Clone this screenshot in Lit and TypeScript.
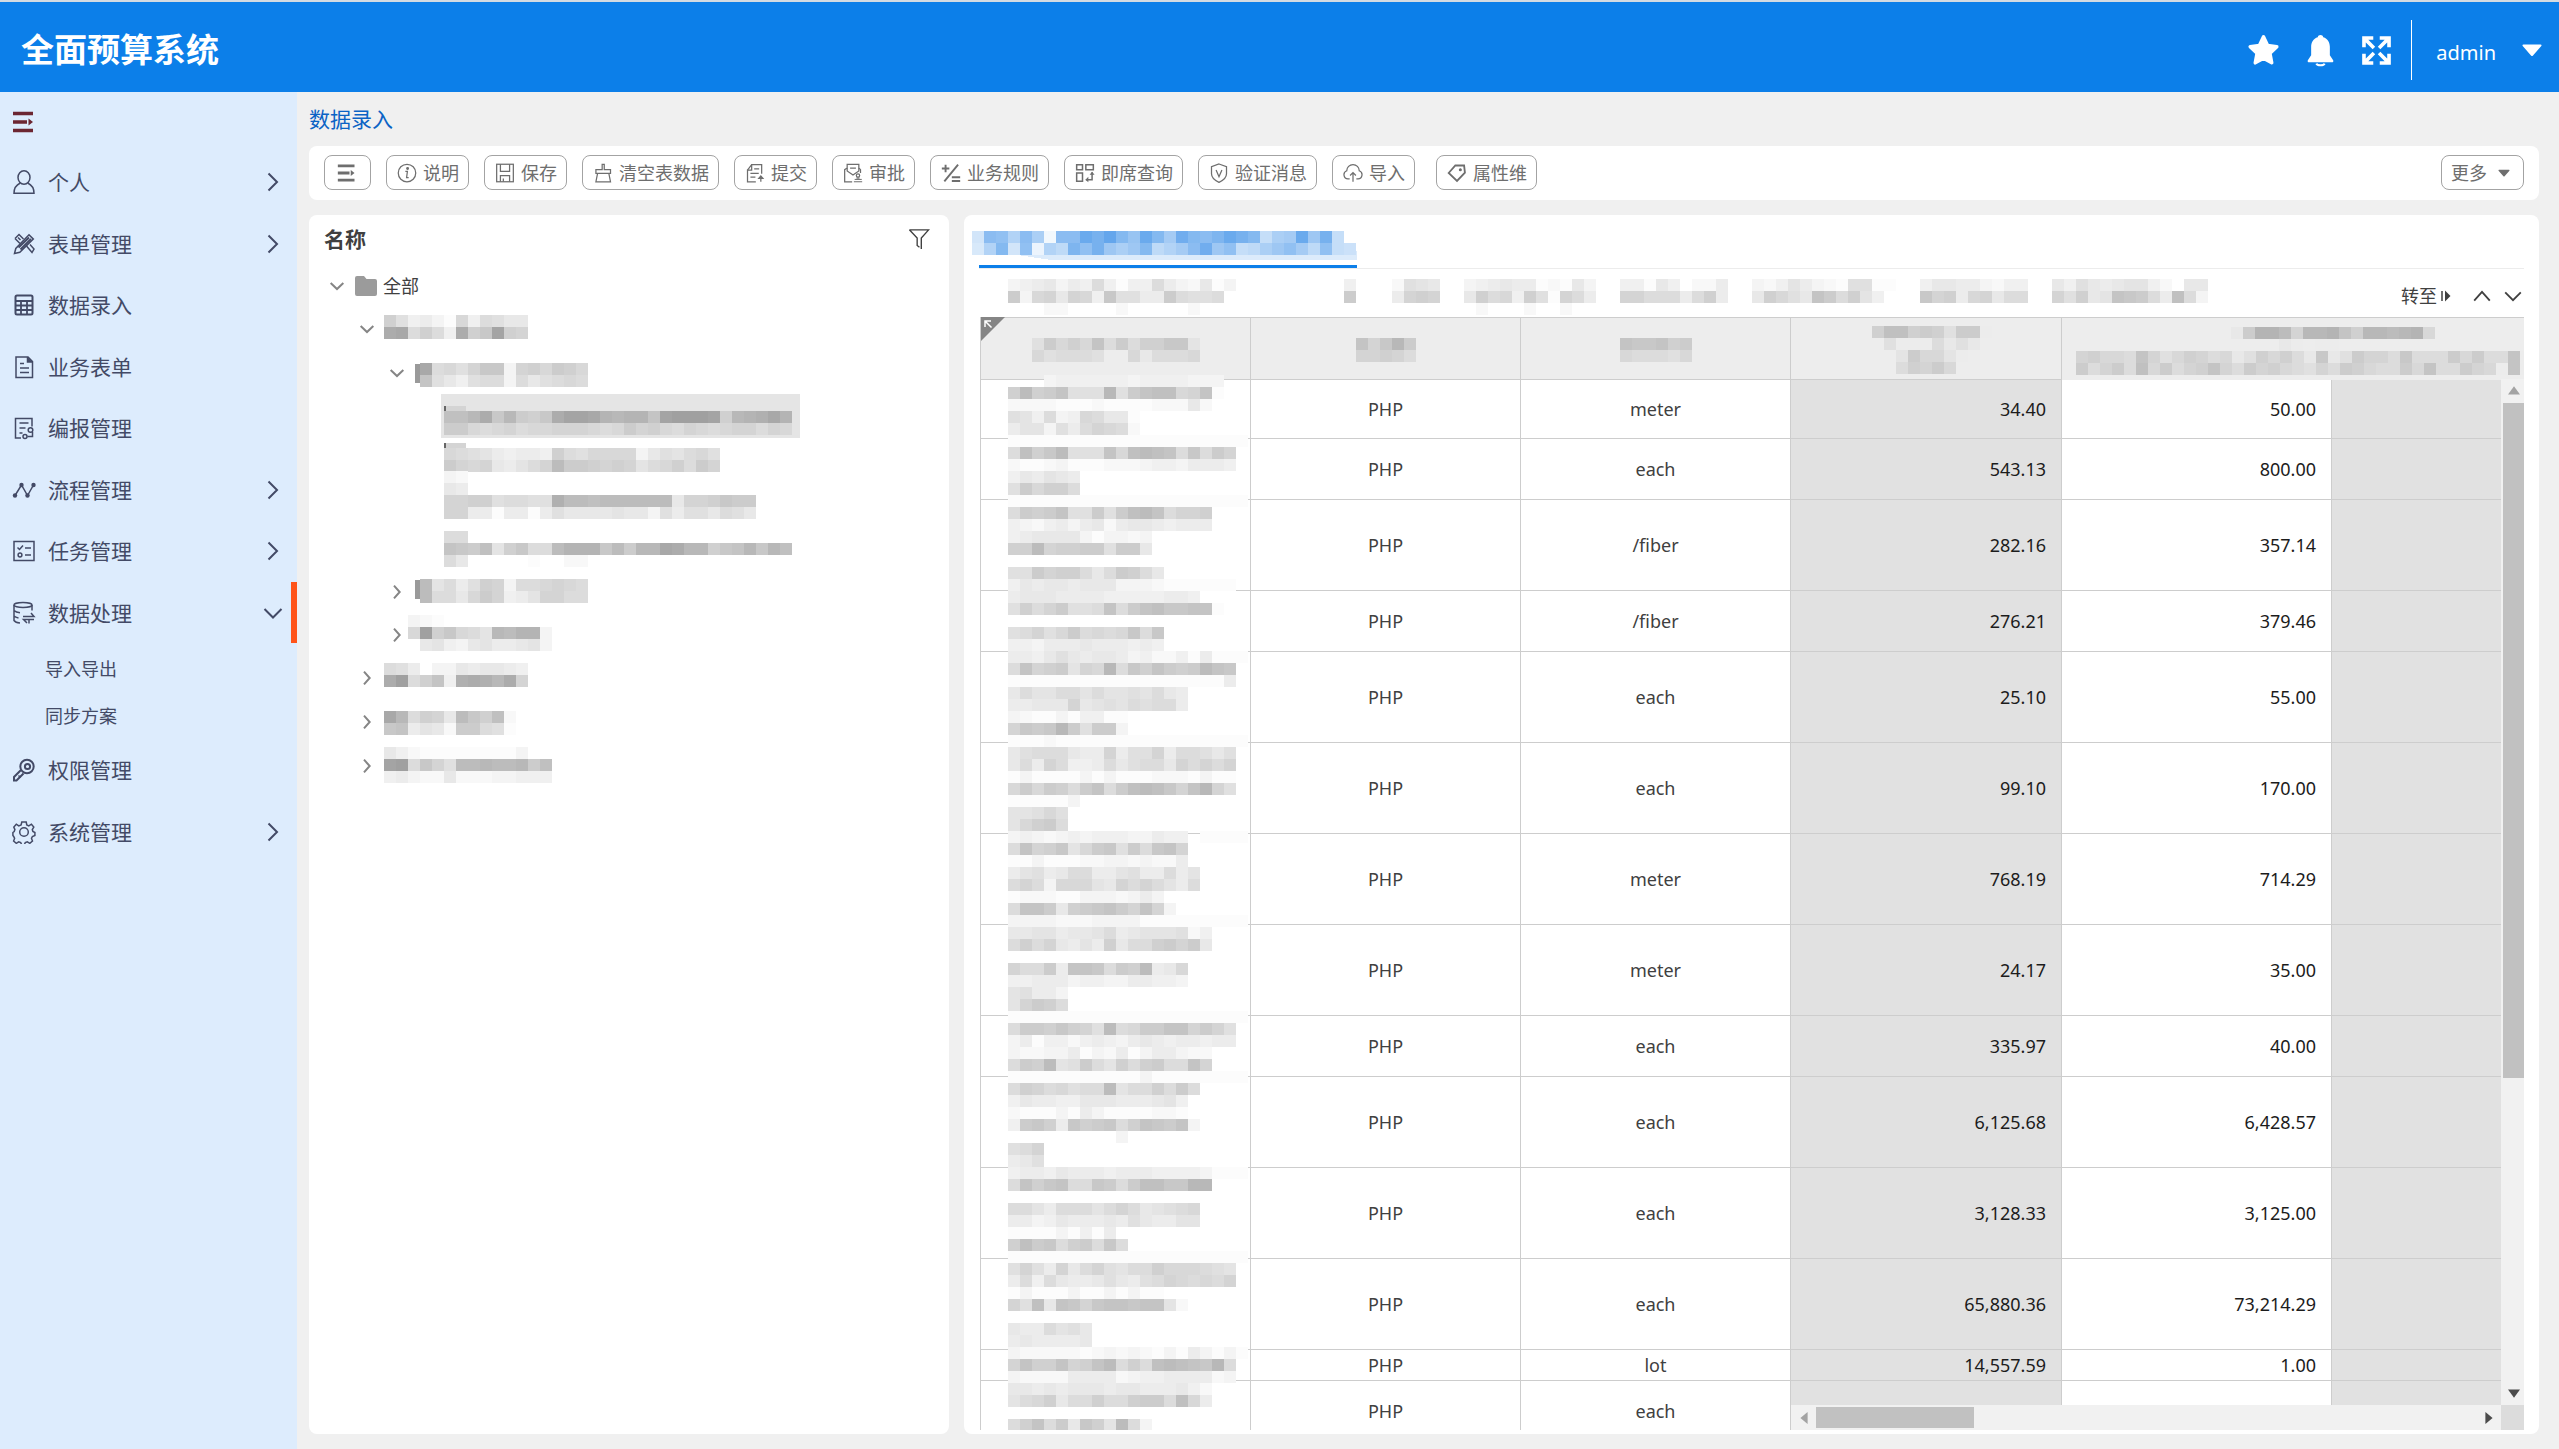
import { LitElement, html, svg, css, nothing, type TemplateResult } from "lit";
import { customElement, property } from "lit/decorators.js";
import { classMap } from "lit/directives/class-map.js";

const CELL = 12;

/** Shade letters run from A (dark) to X (nearly white); "." leaves a gap, "@n" jumps to column n. */
function shade(letter: string, tone: string): string {
  const step = letter.charCodeAt(0) - 65;
  if (tone === "blue") {
    const t = step / 24;
    const mix = (from: number) => Math.round(from + (255 - from) * t);
    return `rgb(${mix(100)},${mix(166)},${mix(236)})`;
  }
  const v = 160 + step * 4;
  return `rgb(${v},${v},${v})`;
}

/** Blocks that stand in for confidential text. */
function mosaic(lines: string[], x = 0, y = 0, width = 240, height = 24, tone = "grey", under: unknown = nothing) {
  const cells: TemplateResult[] = [];
  lines.forEach((line, row) => {
    let col = 0;
    for (const part of line.match(/@\d+|./g) ?? []) {
      if (part[0] === "@") {
        col = Number(part.slice(1));
        continue;
      }
      if (part !== ".") {
        cells.push(
          svg`<rect x=${x + col * CELL} y=${y + row * CELL} width=${CELL} height=${CELL} fill=${shade(part, tone)}></rect>`
        );
      }
      col++;
    }
  });
  return html`<svg class="mosaic" width=${width} height=${height} shape-rendering="crispEdges" aria-hidden="true">${under}${cells}</svg>`;
}

const ICONS: Record<string, TemplateResult> = {
  indent: svg`<path d="M1 3.5h20M1 12h14M1 20.5h20" stroke-width="3.4"/><path d="M16.500 8.500l4.500 3.500-4.500 3.500z" fill="currentColor" stroke="none"/>`,
  person: svg`<ellipse cx="12" cy="7.500" rx="6" ry="6.700"/><path d="M8.300 13C4.500 14.800 2 18 2 23.200h20c0-5.200-2.500-8.400-6.300-10.200"/>`,
  tools: svg`<path d="M3 6.500l4-4 4.500 4.500M3 6.500l5 5M14.500 14l5.500 6.500 2-3.500-4-4.500M6 5.500l2.500 2.500"/><path d="M2.500 21.500l1.300-5L17 2.800l4.300 4.300L7.800 20.300z" /><path d="M6.500 15.500L17 5.500M8.500 17.500L19 7" stroke-width="2"/>`,
  calc: svg`<rect x="3.500" y="2.500" width="17" height="19" rx="1.500" stroke-width="2"/><path d="M3.500 8h17M3.500 12.500h17M3.500 17h17M9 8v13M15 8v13" stroke-width="1.800"/>`,
  doc: svg`<path d="M4 2h12l4.500 4.500V22.500H4z"/><path d="M15.500 2v5h5" fill="currentColor"/><path d="M8 8.500h4M8 13h9M8 17.500h9"/>`,
  report: svg`<path d="M9 22H3.500V2.500H20v8"/><path d="M7.500 7h9M7.500 12h6M7.500 17h3"/><circle cx="18.500" cy="14" r="2.300"/><circle cx="13" cy="20.500" r="2"/><path d="M20.500 16v4.500h-5"/>`,
  flow: svg`<path d="M3 17.500L9.500 7l6 10.500L21.500 7"/><g fill="currentColor" stroke="none"><circle cx="3" cy="17.500" r="2.200"/><circle cx="9.500" cy="7" r="2.200"/><circle cx="15.500" cy="17.500" r="2.200"/><circle cx="21.500" cy="7" r="2.200"/></g>`,
  task: svg`<rect x="2" y="2.500" width="20" height="19"/><path d="M5.500 8.500l2 2 3.500-4M13 9h6M13 16h6"/><circle cx="8" cy="16" r="1.900"/>`,
  data: svg`<ellipse cx="11" cy="4" rx="9" ry="2.500"/><path d="M2 4v15.500c1 1.500 3 2.300 6 2.500M20 4v5.500M2 9.500c1.500 1.400 3.500 2 6 2.200M2 15c1 1 2.500 1.600 4.500 2"/><path d="M11 15.500h11l-3-3.500M22 18.500H11.500l3.500 3.500M17 18.500v4"/>`,
  key: svg`<path d="M11.500 15.500L4.500 22.500 2 22.500v-3.500l7-7" stroke-width="2"/><path d="M6.500 17.500l2 2" /><circle cx="15" cy="8.500" r="6.700" stroke-width="2"/><circle cx="15.500" cy="8.500" r="2.600" stroke-width="2"/>`,
  gear: svg`<circle cx="12" cy="12" r="4.300"/><path d="M9.800 2h4.400l.6 3 2 .9 2.600-1.700 2.400 2.900-1.500 2.500.6 1.900 2 1v3l-2.500 1-.9 1.900 1 2.700-2.700 2.200-2.500-1.500-2 .7-1 2.400H9.700l-1-2.400-2-.7-2.400 1.500-2.700-2.200 1-2.700-.9-1.900-.8-1v-3l1.300-1 .7-1.900L1.800 7.100l2.500-2.900L6.800 5.900l2.300-.9z"/>`,
  info: svg`<circle cx="12" cy="12" r="10.500"/><path d="M10 10h2.500l-1 7.500h2.500"/><circle cx="12.700" cy="6.500" r="1" fill="currentColor"/>`,
  save: svg`<rect x="2" y="1.500" width="20" height="21"/><path d="M6.500 1.500V10h11V1.500M6.500 22.500V15h11v7.500M10 18.500v4"/>`,
  brush: svg`<path d="M11 8V1.500h2.500V8H21v4.500H3.500V8zM5.500 12.500L3.500 22.500h17.500L19 12.500"/>`,
  submit: svg`<path d="M13 22.500H3V8.500h5V2H20v11"/><path d="M3 8.500L8 2M11 7h6M6.500 12.500h10M6.500 17h6"/><path d="M19 22.500v-6M16.500 18.500l2.500-3 2.500 3z" fill="currentColor"/>`,
  approve: svg`<path d="M11 22.500H2V8l3-2V1.500h14V6l2 2v4"/><path d="M5 6v3.500l7 5 7-5V6M8.500 6h7"/><circle cx="18" cy="15" r="2"/><path d="M17 17v2.500M19 17v2.500M13 22.500h10M14 19.700h8.500" stroke-width="1.200"/>`,
  rules: svg`<path d="M1 6.500h9M5.500 2v9M20.500 2L4 22M13 17h10M13 21.500h10" stroke-width="2.300"/>`,
  query: svg`<path d="M2 2h7v6H2zM13 2h9v6h-9zM2 12h7v10H2zM13 20h7.500V11" stroke-width="1.800"/><path d="M17.500 14l3-3.500 3 3.500zM16 16.500l-3.500 3.500 3.500 3z" fill="currentColor" stroke="none"/>`,
  verify: svg`<path d="M12 1.200l9 3.300v8.500c0 4.500-4 8-9 10.300-5-2.300-9-5.800-9-10.300V4.500z"/><path d="M8.500 8.500l3.500 8 3.500-8"/>`,
  cloud: svg`<path d="M8 19H6a5 5 0 01-1.500-9.700 7.500 7.500 0 0115 0A5 5 0 0118 19h-2"/><path d="M12 22.500V11.500M8.500 15l3.500-3.500 3.500 3.500"/>`,
  tag: svg`<path d="M2 12L10 3h10.500l1 8.500L12 21.500z" stroke-width="2.200"/><circle cx="16" cy="8" r="1.100" fill="currentColor"/>`,
  right: svg`<path d="M7.500 3.500l8.500 8.500-8.500 8.500" stroke-width="2"/>`,
  down: svg`<path d="M3.500 8l8.500 8.500L20.500 8" stroke-width="2"/>`,
  up: svg`<path d="M3.500 17L12 7.500 20.500 17" stroke-width="2"/>`,
  treeRight: svg`<path d="M7.500 2.500l8.500 9.500-8.500 9.500" stroke-width="3"/>`,
  treeDown: svg`<path d="M2.500 7.500L12 16.500l9.500-9" stroke-width="3"/>`,
  caret: svg`<path d="M3.500 6.500h17a1 1 0 01.8 1.500l-8.300 9.500a1.300 1.300 0 01-2 0L2.700 8a1 1 0 01.8-1.500z" fill="currentColor" stroke="none"/>`,
  filter: svg`<path d="M1.500 2h21L14.500 11v12M1.500 2L10 11v8l2.500 2"/>`,
  folder: svg`<path d="M1 4a2 2 0 012-2h7l2.500 3H21a2 2 0 012 2v13a2 2 0 01-2 2H3a2 2 0 01-2-2z" fill="currentColor" stroke="none"/>`,
  star: svg`<path d="M12 2l3 6.300 6.700.9-5 4.800 1.300 7-6-3.400L6 21l1.300-7-5-4.800L9 8.300z" fill="currentColor" stroke-linejoin="round" stroke-width="2.500"/>`,
  bell: svg`<path d="M12 .8c1 0 1.800.6 2 1.500 3.300 1 4.800 3.700 4.800 7v6.200l2.400 3.500c.4.800 0 1.500-.9 1.500H3.700c-.9 0-1.300-.7-.9-1.500l2.400-3.500V9.300c0-3.300 1.500-6 4.800-7 .2-.9 1-1.500 2-1.500z" fill="currentColor" stroke="none"/><path d="M9 21.500c.7 1.600 5.300 1.600 6 0" stroke-width="1.500"/>`,
  expand: svg`<path d="M2.300 9.500V2.300h7.200M3 3l7 7M14.500 2.300h7.200v7.200M21 3l-7 7M2.300 14.500v7.200h7.200M3 21l7-7M14.500 21.700h7.200v-7.200M21 21l-7-7" stroke-width="2.800"/>`,
  jump: svg`<path d="M4 2v20" stroke-width="3"/><path d="M10 1l11 11-11 11z" fill="currentColor" stroke="none"/>`,
};

function icon(name: string, size: number, cls = "") {
  return html`<svg class="icon ${cls}" width=${size} height=${size} viewBox="0 0 24 24" fill="none" stroke="currentColor" stroke-width="1.5" aria-hidden="true">${ICONS[name]}</svg>`;
}

const FONT = css`"Noto Sans", "Noto Sans CJK SC", sans-serif`;

const shared = css`
  * { box-sizing: border-box; }
  button { font: inherit; color: inherit; background: none; border: 0; padding: 0; margin: 0; cursor: pointer; }
  a { color: inherit; text-decoration: none; }
  ul { list-style: none; margin: 0; padding: 0; }
  h1, h2 { margin: 0; }
  .icon, .mosaic { display: block; flex: none; }
  .mosaic { overflow: visible; }
`;

interface MenuItem { label: string; icon: string; arrow?: "right" | "down"; children?: string[]; }

const MENU: MenuItem[] = [
  { label: "个人", icon: "person", arrow: "right" },
  { label: "表单管理", icon: "tools", arrow: "right" },
  { label: "数据录入", icon: "calc" },
  { label: "业务表单", icon: "doc" },
  { label: "编报管理", icon: "report" },
  { label: "流程管理", icon: "flow", arrow: "right" },
  { label: "任务管理", icon: "task", arrow: "right" },
  { label: "数据处理", icon: "data", arrow: "down", children: ["导入导出", "同步方案"] },
  { label: "权限管理", icon: "key" },
  { label: "系统管理", icon: "gear", arrow: "right" },
];

@customElement("side-menu")
export class SideMenu extends LitElement {
  static styles = [shared, css`
    :host { display: block; background: #ddecfd; color: #434a66; font-size: 21px; line-height: 30px; }
    .toggle { display: flex; align-items: center; height: 59px; padding: 0 12px; color: #6c2632; }
    .item { display: flex; align-items: center; gap: 12px; width: 100%; height: 62px; padding: 0 12px; text-align: left; }
    .entry:nth-child(even) .item { height: 61px; }
    .item.open { border-right: 6px solid #ff5419; padding-right: 6px; }
    .label { flex: 1; }
    .subs { padding-top: 2px; }
    .sub { display: flex; align-items: center; height: 47px; padding-left: 45px; font-size: 18px; }
  `];

  render() {
    return html`
      <button class="toggle" aria-label="收起菜单">${icon("indent", 24)}</button>
      <nav><ul>
        ${MENU.map((m) => html`<li class="entry">
          ${m.arrow
            ? html`<button class=${classMap({ item: true, open: !!m.children })} aria-expanded=${m.children ? "true" : "false"}>
                ${icon(m.icon, 24)}<span class="label">${m.label}</span>${icon(m.arrow, 24)}
              </button>`
            : html`<a class="item" href="#">${icon(m.icon, 24)}<span class="label">${m.label}</span></a>`}
          ${m.children
            ? html`<ul class="subs">${m.children.map((c) => html`<li><a class="sub" href="#">${c}</a></li>`)}</ul>`
            : nothing}
        </li>`)}
      </ul></nav>
    `;
  }
}

const TOOLS: [string, string][] = [
  ["info", "说明"], ["save", "保存"], ["brush", "清空表数据"], ["submit", "提交"], ["approve", "审批"], ["rules", "业务规则"],
  ["query", "即席查询"], ["verify", "验证消息"], ["cloud", "导入"], ["tag", "属性维"],
];

@customElement("tool-bar")
export class ToolBar extends LitElement {
  static styles = [shared, css`
    :host { display: flex; align-items: center; gap: 15px; height: 54px; padding: 0 15px 1px; background: #fff; border-radius: 8px; color: #6e6e6e; font-size: 18px; line-height: 26px; }
    .tool { display: flex; align-items: center; gap: 6px; height: 35px; padding: 0 9px 0 10px; border: 1px solid #a3a3a3; border-radius: 8px; white-space: nowrap; }
    .tool.menu { padding: 0 13px 0 12px; }
    .tool.last { margin-left: 6px; }
    .tool.more { margin-left: auto; gap: 10px; padding: 0 12px 0 9px; }
  `];

  render() {
    return html`
      <button class="tool menu" aria-label="切换目录">${icon("indent", 20)}</button>
      ${TOOLS.map(([name, label], i) => html`
        <button class=${classMap({ tool: true, last: i === TOOLS.length - 1 })}>${icon(name, 20)}<span>${label}</span></button>`)}
      <button class="tool more"><span>更多</span>${icon("caret", 14)}</button>
    `;
  }
}

interface Node { kind: string; arrow?: "right" | "down"; x: number; y: number; lines: string[]; mark?: "folder" | "sheet"; selected?: boolean; }

const TREE: Node[] = [
  { kind: "group", arrow: "down", x: 0, y: 8, lines: ["MQUTVXOUPQSS", "DCPMPUDMKBMN"] },
  { kind: "folder", arrow: "down", x: 6, y: 12, mark: "folder", lines: ["CPOQNKKVNMOLMO", "JQSUQPPVPSQPOP"] },
  { kind: "leaf", selected: true, x: 0, y: 17, mark: "sheet", lines: ["IIGDKGLMKDBBCFGFFJBAAABMGFECF", "LLOPONPOONNNOPOLNMOPNOPONNPNO"] },
  { kind: "leaf", x: 0, y: 10, mark: "sheet", lines: ["OPQRTUTTUMPQOOOOVSQRPOQ", "LNONSTRPNHLLMNMNRPOMPLN"] },
  { kind: "leaf", x: 0, y: -11, lines: ["VW", "ST", "NNMMQPPQQEHHIHHHHHHSNNMKLL", "NNTTXTTXTQSSSSRSSVQTQQSPQS"] },
  { kind: "leaf", x: 0, y: 5, lines: ["PP", "JKLIRMKPPHFFFKHLGGCDGGMKJGKGI", "PS.....X..WW"] },
  { kind: "folder", arrow: "right", x: 6, y: 9, mark: "folder", lines: ["HRPTQMNVPPONOP", "HPPSOLNUTRNNPP"] },
  { kind: "folder", arrow: "right", x: -6, y: 2, lines: ["VWX", "OAMKOPRGHFFV", ".SRUVSRTTSRV"] },
  { kind: "group", arrow: "right", x: 0, y: 7, lines: ["PQT.VVSTSSTU", "DAPMJUEDEGDN"] },
  { kind: "group", arrow: "right", x: 0, y: 11, lines: ["CGPMNSHKMIW", "KJTRSWLLPQX"] },
  { kind: "group", arrow: "right", x: 0, y: 3, lines: ["SUWXXXXXXXXV", "BAPKNQHHGHHGLI", "UTVWWSWWWVVUUU"] },
];

@customElement("form-tree")
export class FormTree extends LitElement {
  static styles = [shared, css`
    :host { display: block; background: #fff; border-radius: 8px; color: #404040; overflow: hidden; }
    .head { display: flex; align-items: center; justify-content: space-between; height: 49px; padding: 0 19px 2px 15px; }
    h2 { font-size: 21px; line-height: 30px; font-weight: 700; }
    .row { display: flex; align-items: center; gap: 9px; height: 43px; padding-left: 20px; font-size: 18px; line-height: 26px; }
    .row.group { height: 44px; padding-left: 50px; }
    .row.folder { padding-left: 80px; }
    .row.leaf { height: 44px; margin-left: 132px; padding-left: 3px; width: 359px; }
    .row.selected { background: #e5e5e5; }
    .row.mask { align-items: flex-start; }
    .row.mask .arrow { height: 100%; display: flex; align-items: center; }
    .arrow, .folder-icon { color: #858585; }
    .name { display: flex; align-items: center; gap: 5px; }
    .folder-icon { color: #9b9b9b; }
  `];

  private under(mark?: string, y = 0) {
    if (mark === "folder") return svg`<rect x="1" y=${y + 1} width="16" height="19" rx="1" fill="#9a9a9a"></rect>`;
    if (mark === "sheet") return svg`<path d="M1 ${y + 4}v-8h14v6" fill="none" stroke="#666" stroke-width="2"></path><rect x="2" y=${y - 5} width="20" height="6" fill="#d4d4d4"></rect>`;
    return nothing;
  }

  render() {
    return html`
      <div class="head"><h2>名称</h2><button aria-label="筛选">${icon("filter", 22)}</button></div>
      <ul role="tree">
        <li class="row" role="treeitem" aria-expanded="true">
          <button class="arrow" aria-label="折叠">${icon("treeDown", 16)}</button>
          <span class="name">${icon("folder", 24, "folder-icon")}<span>全部</span></span>
        </li>
        ${TREE.map((n) => html`
          <li class=${classMap({ row: true, mask: true, [n.kind]: true, selected: !!n.selected })} role="treeitem" aria-selected=${n.selected ? "true" : "false"}>
            ${n.arrow ? html`<button class="arrow" aria-label=${n.arrow === "down" ? "折叠" : "展开"}>${icon(n.arrow === "down" ? "treeDown" : "treeRight", 16)}</button>` : nothing}
            ${mosaic(n.lines, n.x, n.y, 340, 42, "grey", this.under(n.mark, n.y))}
          </li>`)}
      </ul>
    `;
  }
}

interface Row { h: number; unit: string; a: string; b: string; y: number; lines: string[]; }
const BAND = "XXXXXXXXXXXXXXXXXXXX";

const ROWS: Row[] = [
  { h: 59, unit: "meter", a: "34.40", b: "50.00", y: -5, lines: ["...VUUUUUUVUUUUVVV", "MHMLJQQQGQLJIIONJX", "WWWWXXXWXXXXWWWSW", "QRUPVUOPSSX", "TRRVQTPNOPW", BAND] },
  { h: 61, unit: "each", a: "543.13", b: "800.00", y: 8, lines: ["PIMKHQQQJOIHIJPKPLN", "WXXWVXXXWWWVUUVTTTU", "USTRST", "QLOMMP", BAND] },
  { h: 91, unit: "/fiber", a: "282.16", b: "357.14", y: 7, lines: ["PLMLJQQLQLIHJPNNM", "UVWUTVTSWTSSTUTTT", "UTSSSSVXVVWV", "MMHNMMLLQLLS", "", "QQLNMMPSPLMPS", "USTSSTSSSVVVWXXXXXX"] },
  { h: 61, unit: "/fiber", a: "276.21", b: "379.46", y: 0, lines: ["TSSSTTTTUUUUUTTU", "QMPNLQQPJPLJIKKJJX", "", "QPNQOLPOPOKPK", "UUVTTTSTTTUTU", "TTUSQSTSSTVUWWUXTXXX"] },
  { h: 91, unit: "each", a: "25.10", b: "55.00", y: 11, lines: ["PJNMLRNOGPKMJLMLHJK", "XXXXXXXXXXXXXXXXXXT", "SPRRPPRPRRQRPST", "TTSSSNSRQRPQPPT", "VWXXVXUUXX", "NKLKGLQLLV", "XXXWXXXXXXXXXXXXXXXX"] },
  { h: 91, unit: "each", a: "99.10", b: "170.00", y: 4, lines: ["SQPPPSTTNTQQNTPPQSQ", "SPTNPUUTPSQPPSNPNPN", "XVXXXXVXVXXXWWWXVXX", "OLOLMPLJPLIHIKNJGNQ", "XXXXXV", "RRQOQ", "ROMLP", "VUVWVUVUUUVVTUU.XXXX"] },
  { h: 91, unit: "meter", a: "768.19", b: "714.29", y: 9, lines: ["PJNMKROLKQLPKJN", "XXVXXXWWVVWVWWT", "TRQTSPPTTRQTTPTR", "PNPVOOORSNPNPRTP", "XWWWXXVVVWVTV", "PJJLSMLKJLNJNV", "VVVVWWWVVVVXXXXXXXXX"] },
  { h: 91, unit: "meter", a: "24.17", b: "35.00", y: 2, lines: ["SSRRTSSRPTSRRRQWU", "PMPNSTRTMSPPMLNLS", "", "NPPLTJJKPLMHTSO", "UUTTTVUUVVTTUUV", "RQTTV", "RNLMP", BAND] },
  { h: 61, unit: "each", a: "335.97", b: "40.00", y: 7, lines: ["PLLMKMNQHPOLLJJNLNQ", "VTXUUWUTUVTSTUTTUTT", "VWWVVTXVWTXVTTVWW", "PLMHRQLPRMPMLPPJN", "XXXXXXXXXXXVXXXXXXXX"] },
  { h: 91, unit: "each", a: "6,125.68", b: "6,428.57", y: 6, lines: ["PMNPOQPPHRPPMPLP", "USTTUUSSSTTTSRU", "WXXXVXTVXXXXWWX", "ULKMTKMLKPMJKLJV", ".........V", "QPN", "TSQ", "UTTUSTTTUTTTUUUUVXXX"] },
  { h: 91, unit: "each", a: "3,128.33", b: "3,125.00", y: 11, lines: ["PJMKJPPKLPLIIKKGG", "", "PPRTPPPRPNPSRQPO", "TTVUSTTTSTQSTTRR", "XXXXVXUXT", "MILKPMLPKP", BAND] },
  { h: 91, unit: "each", a: "65,880.36", b: "73,214.29", y: 4, lines: ["QNQTNSPNQRPPMOOOPQR", "TPUPSTTSQSTQPNOPOPN", "XVXXXVXXVXVXX", "NQISJKNKJJKJJRW", "", "STTPRQS", "TSTTTTS", "VWWWWWXWVWVWXVXTVXVX"] },
  { h: 31, unit: "lot", a: "14,557.59", b: "1.00", y: 9, lines: ["NJMMJNMJHPMPIHIJKGP", "VWWWWTTTTWVUUTTTTWV"] },
  { h: 61, unit: "each", a: "3,704.04", b: "4,000.00", y: 2, lines: ["SSTSTSSSTSSTTTSUW", "RPOMSPPMPPMLLPIOT", "", "PMJPLSKMRHPV"] },
];

@customElement("data-sheet")
export class DataSheet extends LitElement {
  @property({ type: Array }) rows: Row[] = ROWS;

  static styles = [shared, css`
    :host { display: flex; flex-direction: column; min-width: 0; background: #fff; border-radius: 8px; padding: 0 15px 4px; overflow: hidden; color: #404040; }
    .tabs { display: flex; height: 54px; border-bottom: 1px solid #ececec; }
    .tab { width: 378px; height: 53px; border-bottom: 3px solid #0c7fe9; }
    .dims { display: flex; justify-content: space-between; height: 48px; }
    .go { display: flex; align-items: center; padding-top: 5px; font-size: 18px; line-height: 26px; }
    .go .jump { display: flex; align-items: center; gap: 3px; margin-right: 10px; }
    .go .step { padding: 0 0 0 9px; }
    .view { position: relative; flex: 1; min-height: 0; padding-left: 1px; overflow: hidden; }
    table { table-layout: fixed; width: 1623px; border-collapse: separate; border-spacing: 0; border-left: 1px solid #cdcdcd; border-top: 1px solid #cdcdcd; font-size: 18px; line-height: 26px; }
    th { height: 31px; padding: 0; background: #ededed; font-weight: 400; vertical-align: top; }
    th.split { border-right: 1px solid #cdcdcd; border-bottom: 1px solid #cdcdcd; vertical-align: middle; }
    th .mosaic { margin: 0 auto; }
    th.left .mosaic { margin: 0; }
    td { padding: 0; border-right: 1px solid #cdcdcd; border-bottom: 1px solid #cdcdcd; text-align: center; }
    td.label { vertical-align: top; padding-left: 27px; }
    td.num { padding-right: 15px; text-align: right; color: #1c1c1c; }
    td.locked { background: #e1e1e1; }
    .corner { position: absolute; left: 2px; top: 0; }
    .vbar, .hbar { position: absolute; display: flex; background: #f1f1f1; color: #4b4b4b; }
    .vbar { top: 62px; right: 0; bottom: 25px; width: 23px; flex-direction: column; align-items: center; padding-left: 2px; }
    .hbar { left: 812px; right: 23px; bottom: 0; height: 25px; align-items: center; }
    .end { position: absolute; right: 0; bottom: 0; width: 23px; height: 25px; background: #dcdcdc; }
    .track { display: flex; flex: 1; width: 100%; }
    .vbar .track { flex-direction: column; }
    .thumb { background: #c1c1c1; }
    .vbar .thumb { height: 69%; }
    .hbar .thumb { width: 24%; height: 21px; }
    .cap { display: flex; align-items: center; justify-content: center; flex: none; width: 25px; height: 24px; }
    .vbar .cap { width: 21px; }
    .cap.off { color: #a3a3a3; }
  `];

  private cap(points: string, off = false) {
    return html`<span class=${classMap({ cap: true, off })}><svg width="12" height="12" viewBox="0 0 10 10" aria-hidden="true"><polygon points=${points} fill="currentColor"></polygon></svg></span>`;
  }

  render() {
    return html`
      <div class="tabs"><div class="tab">
        ${mosaic(["RGHMGLWGGBDAFIBFKCFGEBDFPLKBJDP", "SMFRHVMOEHDJLJFOMKGCJHPOLJHKOHPQ"], -7, 16, 378, 50, "blue",
          svg`<path d="M12 36h366v9H72z" fill="#dcebfb"></path>`)}
      </div></div>
      <div class="dims">
        ${mosaic([
          "VUTSVTUPUXUUPTVWSXV@28U@32WQRS@38VUTSTTXWXSV@51UUXSU.WWT@62VWURTVWXQQXX@76USSTTVWUU@87SUQSTSRRUW.SS",
          "LVONSNOUKQQTTLPQQP@28L@32TNMN@38SMPOUMQXNPT@51NNPPPTPMT@62SMOQSJLPMRU@76KNMTONSPP@87NQMSRJKLPTIPV",
          "...WW....W.....W@39W@43W@46W",
        ], 29, 10, 1260, 46)}
        <div class="go">
          <button class="jump"><span>转至</span>${icon("jump", 12)}</button>
          <button class="step" aria-label="上一个">${icon("up", 22)}</button>
          <button class="step" aria-label="下一个">${icon("down", 22)}</button>
        </div>
      </div>
      <div class="view">
        <table>
          <colgroup>
            <col style="width:270px"><col style="width:270px"><col style="width:270px"><col style="width:271px"><col style="width:270px"><col style="width:271px">
          </colgroup>
          <thead>
            <tr>
              <th class="split" rowspan="2" scope="col">${mosaic(["QLOMOJPLPMMKKR", "OQPPPQ..OSPPPO"], 0, 1, 168, 24)}</th>
              <th class="split" rowspan="2" scope="col">${mosaic(["JNKGL", "NNMNP"], 0, 1, 60, 24)}</th>
              <th class="split" rowspan="2" scope="col">${mosaic(["JKKJML", "OPPPQO"], 0, 1, 72, 24)}</th>
              <th class="split" rowspan="2" scope="col">${mosaic(["MIIMLMQLLT", ".QTTTPSQS", "..RLOORT", "..PMNLO"], 6, 1, 120, 48)}</th>
              <th colspan="2" scope="colgroup">${mosaic(["SLFFHNGGFJMGGHGFO", "....ST.TT"], 0, 9, 204, 30)}</th>
            </tr>
            <tr>
              <th class="left" scope="col">${mosaic(["NMOOPJNQOMNPOSQMOMPSK", "LPNLPIOLPNMJNPLNMOPQN"], 14, 2, 252, 28)}</th>
              <th class="left" scope="col">${mosaic(["SQLNNPKPPPLOLPPJT", "PLMOPPLOJPPLNOTJT"], -4, 2, 200, 28)}</th>
            </tr>
          </thead>
          <tbody>
            ${this.rows.map((r) => html`<tr style="height:${r.h}px">
              <td class="label">${mosaic(r.lines, 0, r.y, 240, r.h - 1)}</td>
              <td>PHP</td>
              <td>${r.unit}</td>
              <td class="num locked">${r.a}</td>
              <td class="num">${r.b}</td>
              <td class="num locked"></td>
            </tr>`)}
          </tbody>
        </table>
        <svg class="corner" width="24" height="24" viewBox="0 0 24 24" aria-hidden="true">
          <path d="M0 0h24L0 24z" fill="#858585"></path>
          <path d="M4 10V4h6M4.500 4.500l6 6" fill="none" stroke="#fff" stroke-width="1.500"></path>
        </svg>
        <div class="vbar">
          ${this.cap("0,8 5,1 10,8", true)}<div class="track"><div class="thumb"></div></div>${this.cap("0,2 10,2 5,9")}
        </div>
        <div class="hbar">
          ${this.cap("8,0 8,10 2,5", true)}<div class="track"><div class="thumb"></div></div>${this.cap("2,0 8,5 2,10")}
        </div>
        <div class="end"></div>
      </div>
    `;
  }
}

@customElement("app-root")
export class AppRoot extends LitElement {
  static styles = [shared, css`
    :host { display: flex; flex-direction: column; height: 100vh; overflow: hidden; background: #f0f0f0; font-family: ${FONT}; }
    header { display: flex; align-items: center; justify-content: space-between; flex: none; height: 92px; padding: 6px 15px 0 21px; background: #0c7fe9; border-top: 2px solid #d4dbe2; color: #fff; }
    h1 { font-size: 33px; line-height: 48px; font-weight: 700; }
    .actions { display: flex; align-items: center; gap: 24px; }
    .user { display: flex; align-items: center; gap: 24px; height: 60px; margin-left: -5px; padding-left: 24px; border-left: 1px solid #fff; font-size: 20px; line-height: 28px; }
    .user .who { padding-top: 6px; }
    .body { display: flex; flex: 1; min-height: 0; }
    side-menu { flex: none; width: 297px; }
    main { display: flex; flex-direction: column; flex: 1; min-width: 0; padding: 0 20px 15px 12px; }
    .crumb { display: flex; align-items: center; flex: none; height: 54px; color: #0b63c5; font-size: 21px; line-height: 30px; }
    tool-bar { flex: none; }
    .panels { display: flex; flex: 1; gap: 15px; min-height: 0; margin-top: 15px; }
    form-tree { flex: none; width: 640px; }
    data-sheet { flex: 1; }
  `];

  render() {
    return html`
      <header>
        <h1>全面预算系统</h1>
        <div class="actions">
          <button aria-label="收藏">${icon("star", 33)}</button>
          <button aria-label="通知">${icon("bell", 33)}</button>
          <button aria-label="全屏">${icon("expand", 31)}</button>
          <button class="user"><span class="who">admin</span>${icon("caret", 24)}</button>
        </div>
      </header>
      <div class="body">
        <side-menu></side-menu>
        <main>
          <a class="crumb" href="#">数据录入</a>
          <tool-bar></tool-bar>
          <div class="panels">
            <form-tree></form-tree>
            <data-sheet></data-sheet>
          </div>
        </main>
      </div>
    `;
  }
}
